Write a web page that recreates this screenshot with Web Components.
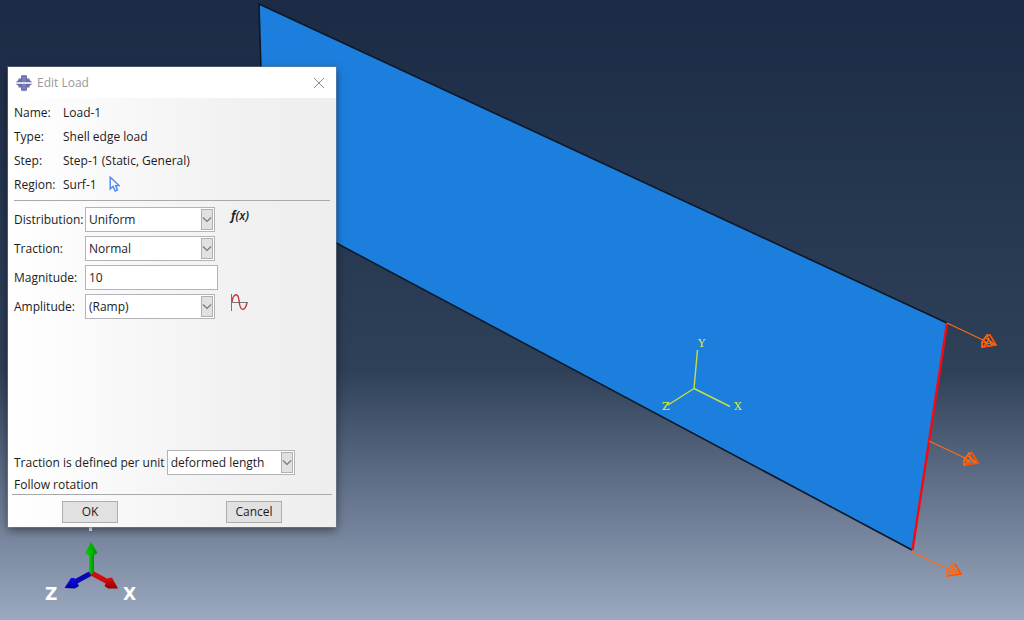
<!DOCTYPE html>
<html lang="en">
<head>
<meta charset="utf-8">
<title>Edit Load</title>
<style>
  html, body { margin: 0; height: 100%; }
  body { font-family: "Open Sans", "Noto Sans", sans-serif; font-size: 12px; color: #1c1c1c; overflow: hidden; }
</style>
</head>
<body>
<cae-viewport>
  <edit-dialog heading="Edit Load">
    <info-row slot="info" label="Name:">Load-1</info-row>
    <info-row slot="info" label="Type:">Shell edge load</info-row>
    <info-row slot="info" label="Step:">Step-1 (Static, General)</info-row>
    <info-row slot="info" label="Region:">Surf-1
      <svg slot="icon" width="11" height="16" viewBox="0 0 11 16" fill="#f4f8ff" stroke="#4a86f5" stroke-width="1.4" role="img" aria-label="Edit region"><path d="M1.2 1.2V13L4 10.4L6.2 15L8.4 14L6.6 9.6H10.2Z"/></svg>
    </info-row>
    <select-field slot="fields" label="Distribution:" options="Uniform|User-defined">
      <fx-button slot="tool"></fx-button>
    </select-field>
    <select-field slot="fields" label="Traction:" options="Normal|Transverse|Shear|Moment|General"></select-field>
    <value-field slot="fields" label="Magnitude:" value="10"></value-field>
    <select-field slot="fields" label="Amplitude:" options="(Ramp)|(Instantaneous)">
      <amplitude-button slot="tool"></amplitude-button>
    </select-field>
    <select-field slot="unit" inline label="Traction is defined per unit" options="deformed length|undeformed length"></select-field>
    <span slot="note">Follow rotation</span>
    <push-button slot="actions">OK</push-button>
    <push-button slot="actions">Cancel</push-button>
  </edit-dialog>
</cae-viewport>

<template id="viewport-template">
  <style>
    :host { display: block; position: relative; height: 100vh; overflow: hidden;
      background: linear-gradient(#1b2b45 0%, #2f4059 60%, #9ba9c0 100%); }
    .scene { display: block; width: 100%; height: 100%; }
    .window { position: absolute; left: 8px; top: 67px; }
    .mini { font: 11px "DejaVu Serif", serif; fill: #e2ee30; }
    .triad { font: bold 17px "DejaVu Sans", sans-serif; fill: #fff; }
  </style>
  <svg class="scene" viewBox="0 0 1024 620" preserveAspectRatio="xMinYMin slice">
    <defs>
      <linearGradient id="green"><stop offset="0" stop-color="#00d400"/><stop offset="1" stop-color="#008f00"/></linearGradient>
      <linearGradient id="red" x1="0" y1="0" x2="0" y2="1"><stop offset="0" stop-color="#e01010"/><stop offset="1" stop-color="#900000"/></linearGradient>
      <linearGradient id="blue" x1="0" y1="0" x2="0" y2="1"><stop offset="0" stop-color="#0c0cf0"/><stop offset="1" stop-color="#0000a0"/></linearGradient>
      <g id="load" fill="none" stroke="#ff6a10">
        <path d="M0 0L36 17" stroke-width="1.2"/>
        <path d="M35 24V19L40 12L43 12L49 22Z" stroke-width="1.6"/>
        <path d="M35 19L49 22M40 12L45 23M36 24L42 17M37 17L41 23M39 15L47 21" stroke-width="1.2"/>
        <path d="M43 12L49 22L36 24" stroke="#ff4a00" stroke-width="1.2"/>
      </g>
    </defs>
    <path d="M259 4L947 323L912 550L337 244L265 205Z" fill="#1c7fde"/>
    <path d="M265 205L259 4L947 323M912 550L265 205" fill="none" stroke="#0b1826" stroke-width="1.6"/>
    <path d="M947 323L912.500 550" stroke="#f50a14" stroke-width="2.400"/>
    <use href="#load" x="947" y="323"/>
    <use href="#load" x="929" y="441"/>
    <use href="#load" x="912" y="552"/>
    <path d="M697.500 350L694 388.500L730 406.500M694 388.500L668 405" fill="none" stroke="#c8de44" stroke-width="1.4"/>
    <text class="mini" x="698" y="347">Y</text>
    <text class="mini" x="734" y="410">X</text>
    <text class="mini" x="662" y="410">Z</text>
    <path d="M89 518H92V531H89Z" fill="#fff"/>
    <path d="M91.500 573L73 583" stroke="#0909b0" stroke-width="5"/>
    <path d="M64.500 588L71 578L74.500 578L79 586L75 588.500Z" fill="url(#blue)"/>
    <path d="M91.500 573L110 583" stroke="#d30b0b" stroke-width="5"/>
    <path d="M118 588.500L112 577.500L108 578L104.500 586L108 588.500Z" fill="url(#red)"/>
    <path d="M89 552H94V572L91.500 575L89 572Z" fill="url(#green)"/>
    <path d="M91 542L97.500 553Q91 558 85 553Z" fill="url(#green)"/>
    <text class="triad" x="45" y="600">Z</text>
    <text class="triad" x="123" y="600">X</text>
  </svg>
  <div class="window"><slot></slot></div>
</template>

<template id="dialog-template">
  <style>
    :host { display: block; }
    section { width: 328px; min-height: 460px; display: flex; flex-direction: column;
      background: linear-gradient(90deg, #fff 0%, #f1f1f1 70%, #eee 100%);
      box-shadow: 0 0 0 1px rgba(125,135,151,.5), 0 3px 9px rgba(0,0,0,.5); }
    header { display: flex; align-items: center; height: 31px; background: #fff; padding: 0 8px; color: #999; }
    h1 { flex: 1; margin: 0 0 0 5px; font-size: 12px; font-weight: normal; }
    header button { border: 0; padding: 4px; background: none; display: flex; }
    .info { padding: 2px 6px 4px; }
    .fields { display: flex; flex-direction: column; gap: 4px; padding: 6px 6px; }
    hr { border: 0; height: 1px; background: #a9a9a9; margin: 0 6px; flex: none; }
    .spacer { flex: 1; }
    .unit { padding: 0 6px; }
    .note { line-height: 18px; padding: 1px 6px 0; }
    .wide { margin: 0 4px; }
    footer { display: grid; grid-template-columns: 1fr 1fr; justify-items: center; padding: 6px 0 4px; }
  </style>
  <section role="dialog" aria-labelledby="title">
    <header>
      <svg width="16" height="16" viewBox="0 0 16 16" aria-hidden="true"><path d="M5 1L6 0H10L11 1V3.500H13.500V5L16 7V7.200H0V7L2.500 5V3.500H5ZM0 8.800H16V9L13.500 11V12.500H11V15L10 16H6L5 15V12.500H2.500V11L0 9Z" fill="#6c6cac"/><path d="M7 0V7M9 0V7M7 9V16M9 9V16" stroke="#8c8cc2"/></svg>
      <h1 id="title"></h1>
      <button type="button" aria-label="Close"><svg width="10" height="10" viewBox="0 0 10 10" stroke="#8c8c8c"><path d="M0 0L10 10M10 0L0 10"/></svg></button>
    </header>
    <div class="info"><slot name="info"></slot></div>
    <hr>
    <div class="fields"><slot name="fields"></slot></div>
    <div class="spacer"></div>
    <div class="unit"><slot name="unit"></slot></div>
    <div class="note"><slot name="note"></slot></div>
    <hr class="wide">
    <footer><slot name="actions"></slot></footer>
  </section>
</template>

<template id="info-template">
  <style>
    :host { display: flex; align-items: center; height: 24px; }
    .label { width: 49px; }
    .value { margin-right: 12px; }
    ::slotted(svg) { display: block; }
  </style>
  <span class="label"></span><span class="value"><slot></slot></span><slot name="icon"></slot>
</template>

<template id="select-template">
  <style>
    :host { display: flex; height: 25px; }
    label { width: 71px; line-height: 25px; white-space: nowrap; }
    :host([inline]) label { width: auto; margin-right: 2px; }
    .box { display: grid; width: 130px; height: 25px; margin-right: 16px; }
    :host([inline]) .box { width: 128px; }
    select, svg { grid-area: 1 / 1; }
    select { appearance: none; box-sizing: border-box; width: 100%; height: 25px; margin: 0; padding: 0 14px 0 3px;
      border: 1px solid #b3b3b8; border-radius: 0; background: #fff; font: inherit; color: inherit; }
    svg { justify-self: end; align-self: center; margin-right: 2px; pointer-events: none; }
  </style>
  <label for="choice"></label>
  <span class="box">
    <select id="choice"></select>
    <svg width="12" height="21" viewBox="0 0 12 21" aria-hidden="true"><rect x=".5" y=".5" width="11" height="20" fill="#e1e1e1" stroke="#b0b0b0"/><path d="M2 8.500L6 12.500L10 8.500" fill="none" stroke="#777" stroke-width="1.2"/></svg>
  </span>
  <slot name="tool"></slot>
</template>

<template id="value-template">
  <style>
    :host { display: flex; height: 25px; }
    label { width: 71px; line-height: 25px; }
    input { box-sizing: border-box; width: 133px; height: 25px; margin: 0; padding: 0 3px; border: 1px solid #b3b3b8; background: #fff; font: inherit; color: inherit; }
  </style>
  <label for="value"></label><input id="value" type="text">
</template>

<template id="push-template">
  <style>
    :host { display: block; }
    button { width: 56px; height: 22px; padding: 0; border: 1px solid #adadad; background: #e1e1e1; font: inherit; color: inherit; line-height: 20px; }
  </style>
  <button type="button"><slot></slot></button>
</template>

<template id="fx-template">
  <style>
    :host { display: block; }
    button { border: 0; padding: 0; background: none; font: italic bold 12px/18px "Open Sans", sans-serif; color: #222; }
    span { font-weight: 600; }
  </style>
  <button type="button" aria-label="Create analytical field">f<span>(x)</span></button>
</template>

<template id="amplitude-template">
  <style>
    :host { display: block; }
    button { border: 0; padding: 0; background: none; display: flex; }
  </style>
  <button type="button" aria-label="Create amplitude"><svg width="18" height="18" viewBox="0 0 18 18" fill="none"><path d="M.5 0V17M0 8.500H17" stroke="#777"/><path d="M1 8C2 -.5 7 -2 8 6C9 19 14 17 16 9" stroke="#c03840" stroke-width="1.4"/></svg></button>
</template>

<script>
  class TemplateElement extends HTMLElement {
    constructor() {
      super();
      const template = document.getElementById(this.constructor.template);
      this.attachShadow({ mode: "open" }).append(template.content.cloneNode(true));
    }
    part$(selector) { return this.shadowRoot.querySelector(selector); }
  }
  class CaeViewport extends TemplateElement { static template = "viewport-template"; }
  class EditDialog extends TemplateElement {
    static template = "dialog-template";
    connectedCallback() { this.part$("h1").textContent = this.getAttribute("heading"); }
  }
  class InfoRow extends TemplateElement {
    static template = "info-template";
    connectedCallback() { this.part$(".label").textContent = this.getAttribute("label"); }
  }
  class SelectField extends TemplateElement {
    static template = "select-template";
    connectedCallback() {
      this.part$("label").textContent = this.getAttribute("label");
      this.part$("select").replaceChildren(...this.getAttribute("options").split("|").map(text => new Option(text)));
    }
  }
  class ValueField extends TemplateElement {
    static template = "value-template";
    connectedCallback() {
      this.part$("label").textContent = this.getAttribute("label");
      this.part$("input").value = this.getAttribute("value");
    }
  }
  class PushButton extends TemplateElement { static template = "push-template"; }
  class FxButton extends TemplateElement { static template = "fx-template"; }
  class AmplitudeButton extends TemplateElement { static template = "amplitude-template"; }

  customElements.define("cae-viewport", CaeViewport);
  customElements.define("edit-dialog", EditDialog);
  customElements.define("info-row", InfoRow);
  customElements.define("select-field", SelectField);
  customElements.define("value-field", ValueField);
  customElements.define("push-button", PushButton);
  customElements.define("fx-button", FxButton);
  customElements.define("amplitude-button", AmplitudeButton);
</script>
</body>
</html>
